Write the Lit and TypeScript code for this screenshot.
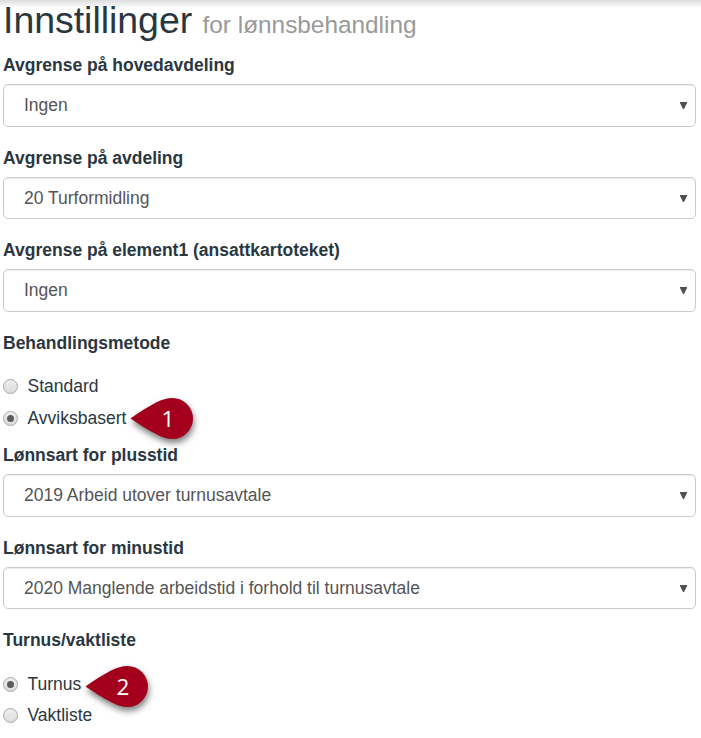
import { LitElement, html, css, nothing } from "lit";
import { customElement, property } from "lit/decorators.js";

@customElement("map-pin")
class MapPin extends LitElement {
  @property() text = "";
  static styles = css`
    :host { display: block; width: 76px; height: 60px; }
    svg { display: block; overflow: visible; }
    path { fill: #a2001c; filter: drop-shadow(1px 4px 3px rgba(0, 0, 0, 0.5)); }
    text { font: 22.5px "Open Sans", "Noto Sans", sans-serif; fill: #fff; text-anchor: middle; }
  `;
  render() {
    return html`<svg width="76" height="60" viewBox="0 0 76 60">
      <path d="M-0.5 20.4 C8 14.5 17 8.8 25 4.6 C31 1.6 36 0 41.5 0 A20.5 20.5 0 0 1 41.5 41 C36 41 31 39.2 25 36 C17 31.8 8 26.3 -0.5 20.4 Z" />
      <text x="37" y="29">${this.text}</text>
    </svg>`;
  }
}

@customElement("select-field")
class SelectField extends LitElement {
  @property() label = "";
  @property() value = "";
  static styles = css`
    :host { display: block; margin-bottom: 18.75px; }
    .label { font-weight: bold; line-height: 25px; margin-bottom: 6.25px; }
    .box {
      box-sizing: border-box; height: 42.5px; display: flex; align-items: center;
      justify-content: space-between; padding: 0 8px 0 20px; background: #fff;
      border: 1px solid #ccc; border-radius: 5px; color: #555;
      box-shadow: inset 0 1px 1px rgba(0, 0, 0, 0.075);
    }
    svg { display: block; fill: #505050; }
  `;
  render() {
    return html`<div class="label">${this.label}</div>
      <div class="box">
        <span>${this.value}</span>
        <svg width="7" height="7" viewBox="0 0 7 7"><path d="M0 0H7V1L4 7H3L0 1Z" /></svg>
      </div>`;
  }
}

@customElement("radio-option")
class RadioOption extends LitElement {
  @property() label = "";
  @property({ type: Boolean }) checked = false;
  @property() pin = "";
  static styles = css`
    :host { display: flex; align-items: center; height: 25px; }
    .dot {
      box-sizing: border-box; width: 15px; height: 15px; border: 1px solid #a8a8a8;
      border-radius: 50%; margin-right: 9.5px; display: grid; place-items: center;
      background: linear-gradient(#eee, #dcdcdc);
    }
    .dot i { width: 7px; height: 7px; border-radius: 50%; background: #5c5c5c; }
    .anchor { position: relative; align-self: flex-start; }
    map-pin { position: absolute; left: 5px; top: -8px; }
    :host([pin="2"]) map-pin { top: -6px; }
  `;
  render() {
    return html`<span class="dot">${this.checked ? html`<i></i>` : nothing}</span>
      <span>${this.label}</span>
      ${this.pin ? html`<span class="anchor"><map-pin .text=${this.pin}></map-pin></span>` : nothing}`;
  }
}

@customElement("app-root")
class AppRoot extends LitElement {
  static styles = css`
    :host {
      display: block; box-sizing: border-box; height: 738px; padding: 0 5px 0 3px; overflow: hidden;
      font: 17.5px/25px "Liberation Sans", Arial, sans-serif; color: #2a3741;
      background: linear-gradient(#dcdcdc, #fff 8px) #fff;
    }
    h1 { margin: 0 0 11.75px; font-size: 37.5px; line-height: 41.25px; font-weight: normal; letter-spacing: -0.04px; }
    small { font-size: 24.375px; line-height: 1; color: #999; letter-spacing: 0; }
    .label { font-weight: bold; }
    .group { display: flex; flex-direction: column; gap: 7.1px; padding-top: 18.4px; height: 87.5px; box-sizing: border-box; }
    .group.last { padding-top: 18.9px; gap: 6.5px; }
  `;
  render() {
    return html`
      <h1>Innstillinger <small>for lønnsbehandling</small></h1>
      <select-field label="Avgrense på hovedavdeling" value="Ingen"></select-field>
      <select-field label="Avgrense på avdeling" value="20 Turformidling"></select-field>
      <select-field label="Avgrense på element1 (ansattkartoteket)" value="Ingen"></select-field>
      <div class="label">Behandlingsmetode</div>
      <div class="group">
        <radio-option label="Standard"></radio-option>
        <radio-option label="Avviksbasert" checked pin="1"></radio-option>
      </div>
      <select-field label="Lønnsart for plusstid" value="2019 Arbeid utover turnusavtale"></select-field>
      <select-field label="Lønnsart for minustid" value="2020 Manglende arbeidstid i forhold til turnusavtale"></select-field>
      <div class="label">Turnus/vaktliste</div>
      <div class="group last">
        <radio-option label="Turnus" checked pin="2"></radio-option>
        <radio-option label="Vaktliste"></radio-option>
      </div>
    `;
  }
}
